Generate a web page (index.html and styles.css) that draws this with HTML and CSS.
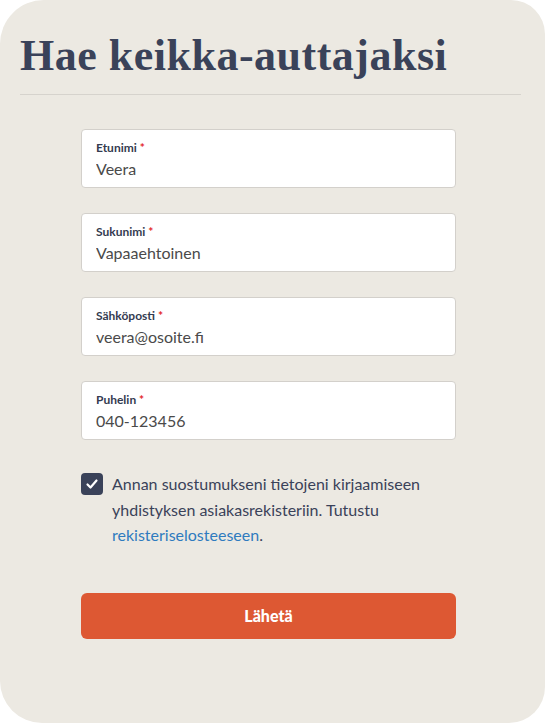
FILE: index.html
```html
<!DOCTYPE html>
<html lang="fi">
<head>
    <meta charset="UTF-8">
    <meta name="viewport" content="width=device-width, initial-scale=1.0">
    <title>Hae keikka-auttajaksi</title>
    <link rel="stylesheet" href="styles.css">
</head>
<body>
    <div class="card">
        <h1>Hae keikka-auttajaksi</h1>
        <form class="form">
            <label class="field">
                <span class="label">Etunimi <span class="req">*</span></span>
                <input type="text" value="Veera">
            </label>
            <label class="field">
                <span class="label">Sukunimi <span class="req">*</span></span>
                <input type="text" value="Vapaaehtoinen">
            </label>
            <label class="field">
                <span class="label">Sähköposti <span class="req">*</span></span>
                <input type="email" value="veera@osoite.fi">
            </label>
            <label class="field">
                <span class="label">Puhelin <span class="req">*</span></span>
                <input type="tel" value="040-123456">
            </label>
            <label class="consent">
                <span class="check">
                    <svg width="14" height="14" viewBox="0 0 14 14"><path d="M2.5 7.5 L5.5 10.5 L11.5 3.5" fill="none" stroke="#fff" stroke-width="2.2" stroke-linecap="round" stroke-linejoin="round"/></svg>
                </span>
                <span>Annan suostumukseni tietojeni kirjaamiseen yhdistyksen asiakasrekisteriin. Tutustu <a href="#">rekisteriselosteeseen</a>.</span>
            </label>
            <button type="button">Lähetä</button>
        </form>
    </div>
</body>
</html>
```

FILE: styles.css
```css
body {
    margin: 0;
    background: #fff;
    font-family: Lato, 'Noto Sans', sans-serif;
}
.card {
    background: #ece9e2;
    width: 545px;
    height: 723px;
    box-sizing: border-box;
    border-radius: 44px 34px 36px 42px;
    padding: 30px 24px 0 20px;
}
h1 {
    font-family: 'Liberation Serif', 'DejaVu Serif', serif;
    font-weight: bold;
    font-size: 44px;
    letter-spacing: 0.5px;
    line-height: 52px;
    color: #3a4259;
    margin: 0;
    padding-bottom: 12px;
    border-bottom: 1px solid #d6d3cd;
}
.form {
    width: 375px;
    margin: 34px 0 0 61px;
    display: flex;
    flex-direction: column;
}
.field {
    display: flex;
    flex-direction: column;
    background: #fff;
    border: 1px solid #d3d0cb;
    border-radius: 4px;
    padding: 11px 14px 8px;
    margin-bottom: 25px;
    height: 59px;
    box-sizing: border-box;
}
.label {
    font-size: 12px;
    font-weight: bold;
    color: #343b50;
    line-height: 14px;
}
.req {
    color: #e3262b;
}
.field input {
    border: none;
    outline: none;
    padding: 0;
    margin-top: 4px;
    font-family: Lato, 'Noto Sans', sans-serif;
    font-size: 16px;
    color: #4a4a4a;
    background: none;
}
.consent {
    display: flex;
    gap: 9px;
    margin-top: 6px;
    font-size: 16px;
    line-height: 25.5px;
    color: #3a4259;
}
.check {
    flex: none;
    width: 22px;
    height: 22px;
    border-radius: 4px;
    background: #3a4259;
    display: flex;
    align-items: center;
    justify-content: center;
    margin-top: 2px;
}
.consent a {
    color: #2f7bbf;
    text-decoration: none;
}
button {
    margin-top: 45px;
    height: 46px;
    background: #dd5833;
    border: none;
    border-radius: 6px;
    color: #fff;
    font-family: Lato, 'Noto Sans', sans-serif;
    font-weight: 900;
    font-size: 16px;
    cursor: pointer;
}
```
